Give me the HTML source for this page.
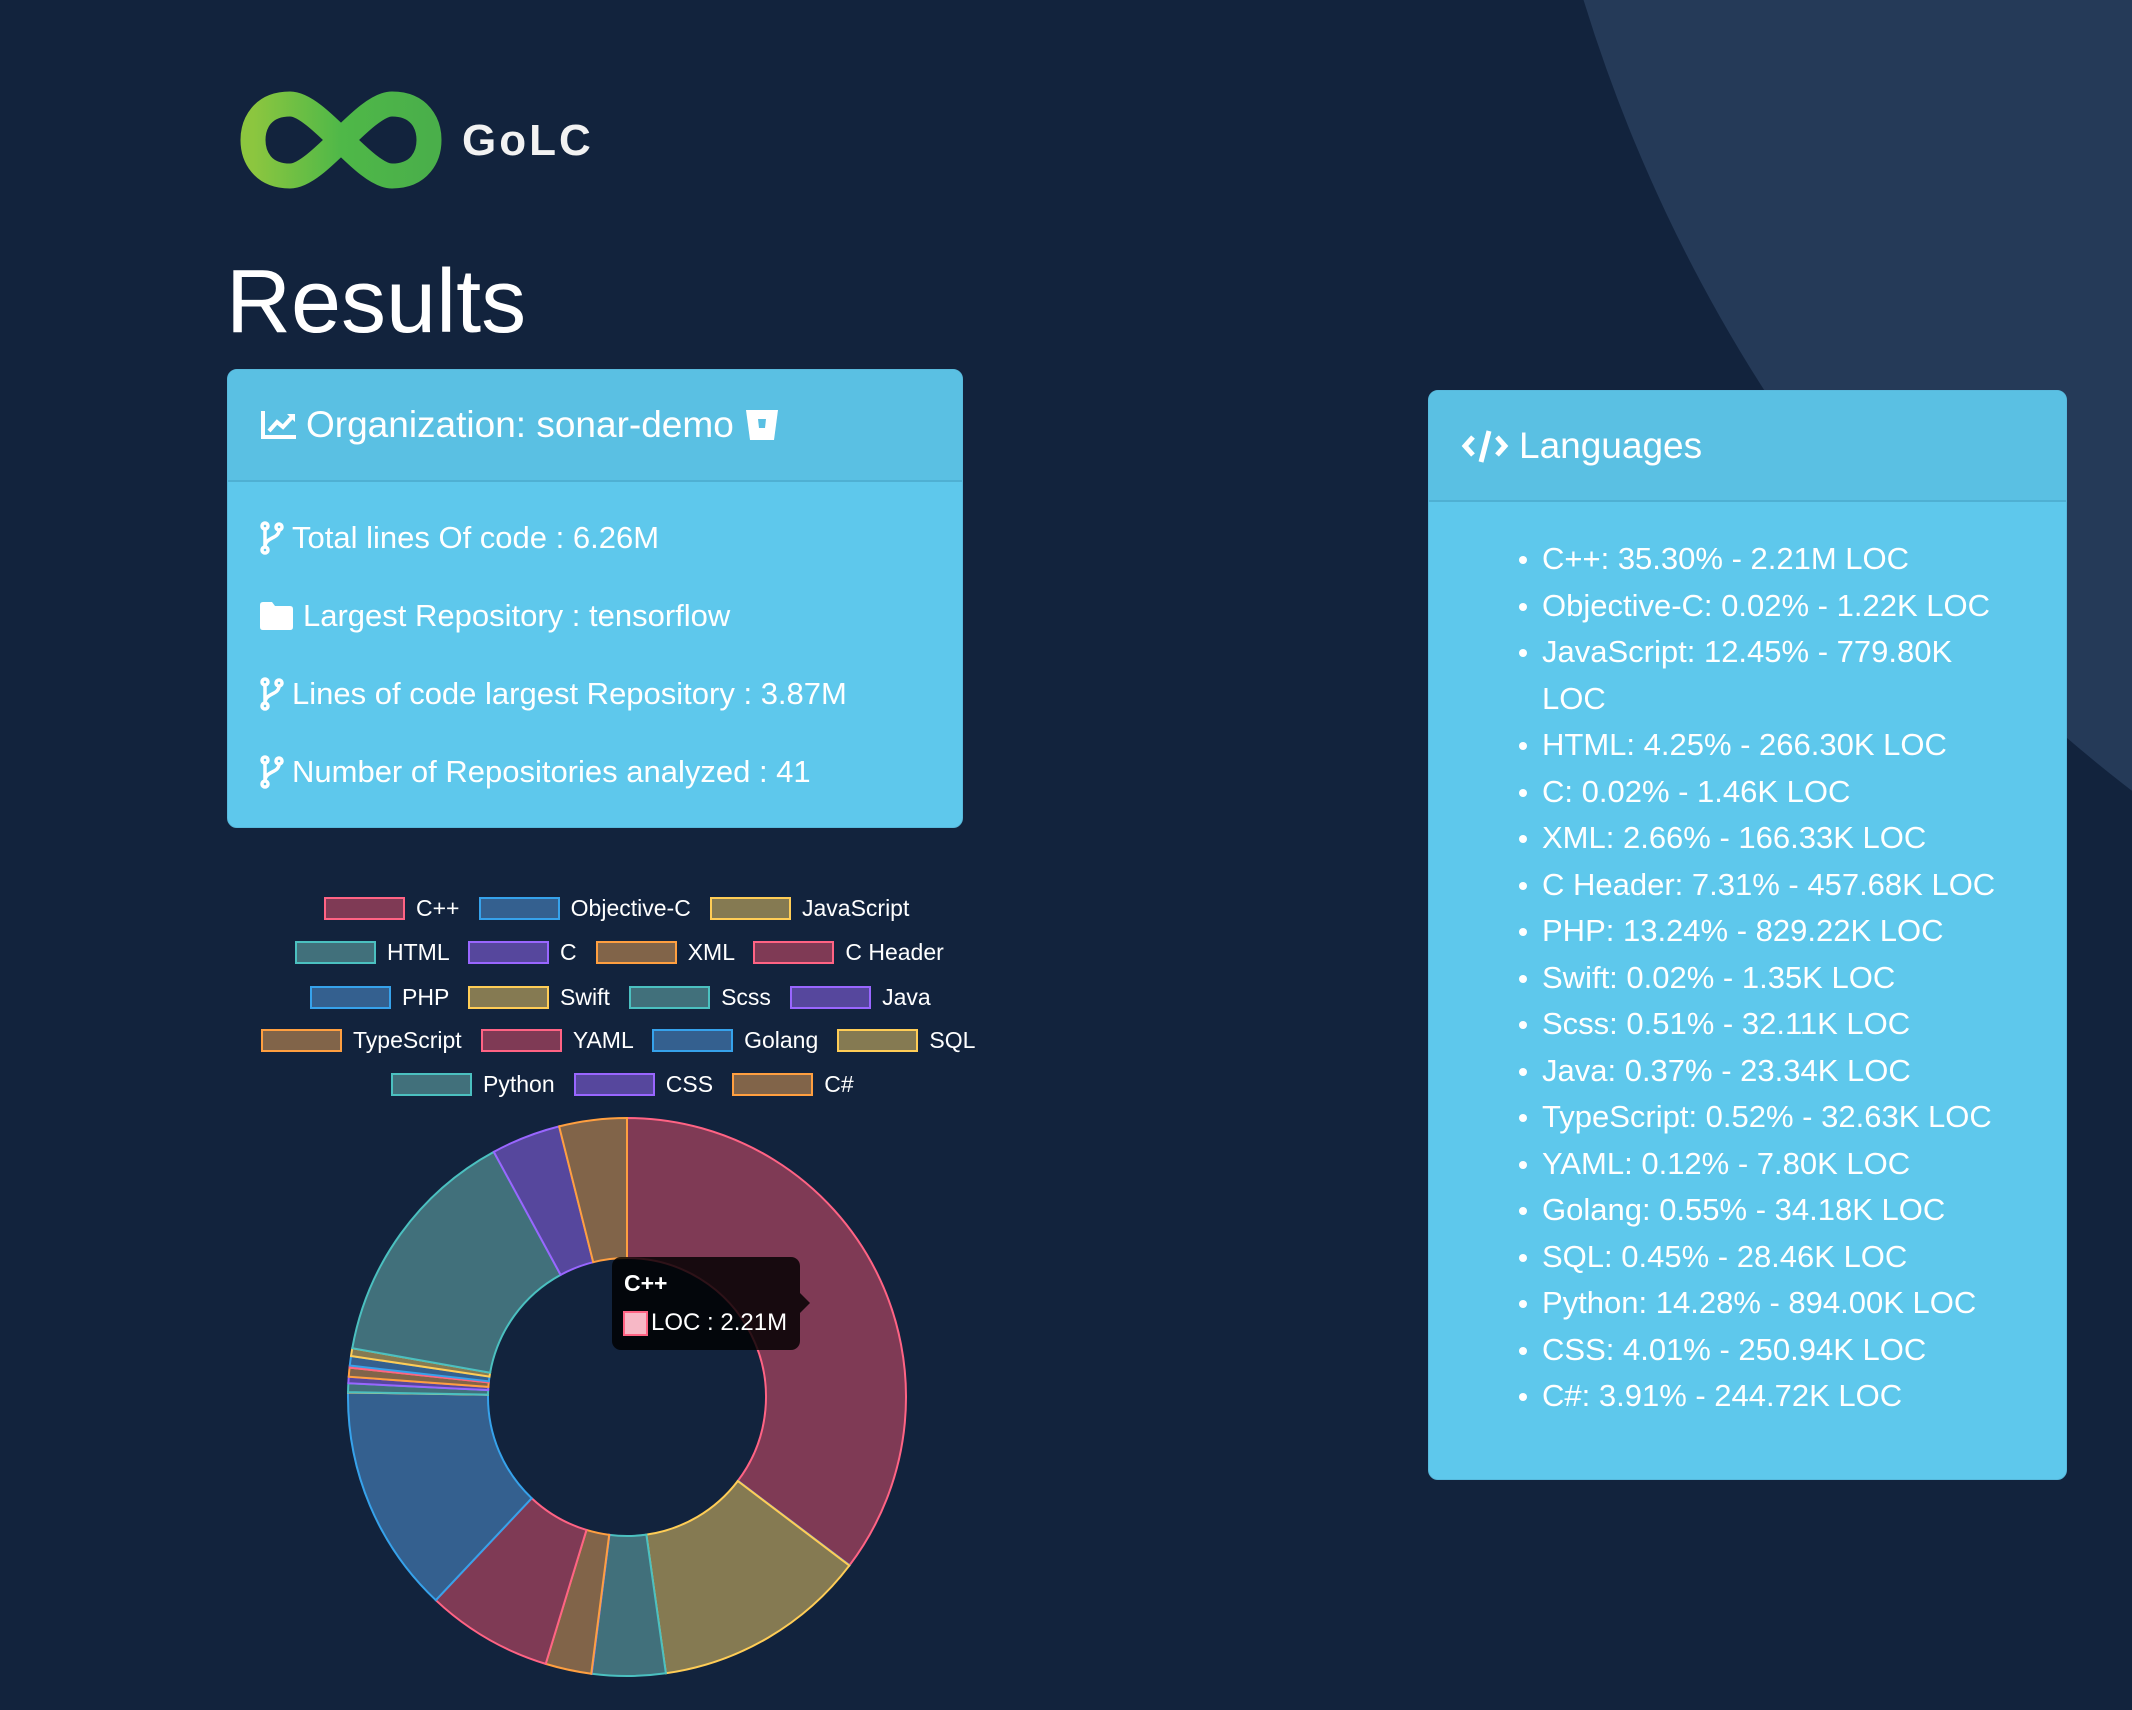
<!DOCTYPE html>
<html><head><meta charset="utf-8">
<style>
*{margin:0;padding:0;box-sizing:border-box}
html,body{width:2132px;height:1710px;overflow:hidden;background:#12233d;font-family:"Liberation Sans",sans-serif;color:#fff;position:relative}
.circ{position:absolute;left:1514px;top:-2047px;width:3166px;height:3166px;border-radius:50%;background:#253a58}
.abs{position:absolute}
.card{position:absolute;border-radius:10px;background:#5ec8ec;overflow:hidden;border:1px solid #58b9dc}
.hd{background:#5ac0e3;border-bottom:2px solid #4fb0d3;display:flex;align-items:center}
.row{position:absolute;left:32px;display:flex;align-items:center;font-size:31px;white-space:nowrap}
.row svg{margin-right:8px}
ul{list-style:none}
li{position:relative;font-size:31px;line-height:46.5px;white-space:nowrap}
li:before{content:"";position:absolute;left:-23px;top:20px;width:8px;height:8px;border-radius:50%;background:#fff}
.lg{position:absolute;font-size:23px;white-space:nowrap;color:#fff}
.lg span{display:inline-block;width:81px;height:23px;vertical-align:-4px;margin-right:11px;border:2px solid}
.r{background:#7f3a55;border-color:#ff6384!important}
.b{background:#34608f;border-color:#36a2eb!important}
.y{background:#857a52;border-color:#ffcd56!important}
.t{background:#41707b;border-color:#4bc0c0!important}
.p{background:#56479d;border-color:#9966ff!important}
.o{background:#816449;border-color:#ff9f40!important}
</style></head><body>
<div class="circ"></div>

<svg class="abs" style="left:238px;top:88px" width="206" height="104" viewBox="0 0 206 104">
<defs><linearGradient id="g" x1="0" x2="1"><stop offset="0" stop-color="#8cc63f"/><stop offset="0.5" stop-color="#4fb848"/><stop offset="1" stop-color="#4aaf4a"/></linearGradient></defs>
<path d="M52 16 C24 16 15 36 15 52 C15 68 24 88 52 88 C80 88 126 16 154 16 C182 16 191 36 191 52 C191 68 182 88 154 88 C126 88 80 16 52 16 Z" fill="none" stroke="url(#g)" stroke-width="25"/>
</svg>
<div class="abs" style="left:462px;top:116px;font-size:44px;font-weight:bold;letter-spacing:3px;color:#f2f2f2">GoLC</div>

<div class="abs" style="left:226px;top:247px;font-size:90px;line-height:110px">Results</div>

<div class="card" style="left:227px;top:369px;width:736px;height:459px">
 <div class="hd" style="height:112px;padding-left:32px;font-size:37px">
  <svg width="38" height="32" viewBox="0 0 38 32" style="margin-right:8px"><path d="M3 2V28H36" fill="none" stroke="#fff" stroke-width="4"/><path d="M9 22L17 13L23 18L33 7" fill="none" stroke="#fff" stroke-width="4"/><path d="M27 5H35V13Z" fill="#fff"/></svg>
  Organization: sonar-demo
  <svg width="36" height="36" viewBox="0 0 36 36" style="margin-left:10px"><path d="M2 3H34L30 33H6Z" fill="#fff"/><path d="M14 12H22L21 21H15Z" fill="#5ac0e3"/></svg>
 </div>
 <div class="row" style="top:150px"><svg width="24" height="34" viewBox="0 0 24 34"><g fill="none" stroke="#fff" stroke-width="3.5"><circle cx="5" cy="5" r="3"/><circle cx="5" cy="29" r="3"/><circle cx="19" cy="6" r="3"/><path d="M5 8V26M19 9C19 18 5 16 5 26"/></g></svg>Total lines Of code : 6.26M</div>
 <div class="row" style="top:228px"><svg width="33" height="28" viewBox="0 0 33 28" style="margin-right:10px"><path d="M0 3Q0 0 3 0H12L15 4H30Q33 4 33 7V25Q33 28 30 28H3Q0 28 0 25Z" fill="#fff"/></svg>Largest Repository : tensorflow</div>
 <div class="row" style="top:306px"><svg width="24" height="34" viewBox="0 0 24 34"><g fill="none" stroke="#fff" stroke-width="3.5"><circle cx="5" cy="5" r="3"/><circle cx="5" cy="29" r="3"/><circle cx="19" cy="6" r="3"/><path d="M5 8V26M19 9C19 18 5 16 5 26"/></g></svg>Lines of code largest Repository : 3.87M</div>
 <div class="row" style="top:384px"><svg width="24" height="34" viewBox="0 0 24 34"><g fill="none" stroke="#fff" stroke-width="3.5"><circle cx="5" cy="5" r="3"/><circle cx="5" cy="29" r="3"/><circle cx="19" cy="6" r="3"/><path d="M5 8V26M19 9C19 18 5 16 5 26"/></g></svg>Number of Repositories analyzed : 41</div>
</div>

<div class="card" style="left:1428px;top:390px;width:639px;height:1090px">
 <div class="hd" style="height:111px;padding-left:32px;font-size:37px">
  <svg width="48" height="36" viewBox="0 0 48 36" style="margin-right:10px"><g fill="none" stroke="#fff" stroke-width="5"><path d="M12 9L4 18L12 27M36 9L44 18L36 27"/><path d="M28 3L20 34"/></g></svg>
  Languages
 </div>
 <ul style="position:absolute;left:113px;top:145px">
  <li>C++: 35.30% - 2.21M LOC</li>
  <li>Objective-C: 0.02% - 1.22K LOC</li>
  <li>JavaScript: 12.45% - 779.80K<br>LOC</li>
  <li>HTML: 4.25% - 266.30K LOC</li>
  <li>C: 0.02% - 1.46K LOC</li>
  <li>XML: 2.66% - 166.33K LOC</li>
  <li>C Header: 7.31% - 457.68K LOC</li>
  <li>PHP: 13.24% - 829.22K LOC</li>
  <li>Swift: 0.02% - 1.35K LOC</li>
  <li>Scss: 0.51% - 32.11K LOC</li>
  <li>Java: 0.37% - 23.34K LOC</li>
  <li>TypeScript: 0.52% - 32.63K LOC</li>
  <li>YAML: 0.12% - 7.80K LOC</li>
  <li>Golang: 0.55% - 34.18K LOC</li>
  <li>SQL: 0.45% - 28.46K LOC</li>
  <li>Python: 14.28% - 894.00K LOC</li>
  <li>CSS: 4.01% - 250.94K LOC</li>
  <li>C#: 3.91% - 244.72K LOC</li>
 </ul>
</div>

<div class="lg" style="left:324px;top:895px"><span class="r"></span>C++ &nbsp; <span class="b"></span>Objective-C &nbsp; <span class="y"></span>JavaScript</div>
<div class="lg" style="left:295px;top:939px"><span class="t"></span>HTML &nbsp; <span class="p"></span>C &nbsp; <span class="o"></span>XML &nbsp; <span class="r"></span>C Header</div>
<div class="lg" style="left:310px;top:984px"><span class="b"></span>PHP &nbsp; <span class="y"></span>Swift &nbsp; <span class="t"></span>Scss &nbsp; <span class="p"></span>Java</div>
<div class="lg" style="left:261px;top:1027px"><span class="o"></span>TypeScript &nbsp; <span class="r"></span>YAML &nbsp; <span class="b"></span>Golang &nbsp; <span class="y"></span>SQL</div>
<div class="lg" style="left:391px;top:1071px"><span class="t"></span>Python &nbsp; <span class="p"></span>CSS &nbsp; <span class="o"></span>C#</div>

<svg id="d" class="abs" style="left:337px;top:1110px" width="580" height="580" viewBox="0 0 580 580"></svg>

<div class="abs" style="left:612px;top:1257px;width:188px;height:93px;background:rgba(0,0,0,0.82);border-radius:9px"></div>
<div class="abs" style="left:800px;top:1293px;width:0;height:0;border-top:10px solid transparent;border-bottom:10px solid transparent;border-left:10px solid rgba(0,0,0,0.82)"></div>
<div class="abs" style="left:624px;top:1270px;font-size:23px;font-weight:bold">C++</div>
<div class="abs" style="left:623px;top:1311px;width:25px;height:25px;background:#f7b8c6;border:2px solid #ff6384"></div>
<div class="abs" style="left:651px;top:1309px;font-size:24px">LOC : 2.21M</div>

<script>
var v=[35.30,0.02,12.45,4.25,0.02,2.66,7.31,13.24,0.02,0.51,0.37,0.52,0.12,0.55,0.45,14.28,4.01,3.91];
var f=["#7f3a55","#34608f","#857a52","#41707b","#56479d","#816449"];
var s=["#ff6384","#36a2eb","#ffcd56","#4bc0c0","#9966ff","#ff9f40"];
var tot=v.reduce(function(a,b){return a+b},0),cx=290,cy=287,R=279,r=139,a=-Math.PI/2,h="";
function p(rad,an){return (cx+rad*Math.cos(an)).toFixed(2)+" "+(cy+rad*Math.sin(an)).toFixed(2)}
for(var i=0;i<v.length;i++){var e=a+v[i]/tot*2*Math.PI,l=(e-a)>Math.PI?1:0;
h+='<path d="M'+p(R,a)+' A'+R+' '+R+' 0 '+l+' 1 '+p(R,e)+' L'+p(r,e)+' A'+r+' '+r+' 0 '+l+' 0 '+p(r,a)+' Z" fill="'+f[i%6]+'" stroke="'+s[i%6]+'" stroke-width="2"/>';a=e;}
document.getElementById("d").innerHTML=h;
</script>
</body></html>
